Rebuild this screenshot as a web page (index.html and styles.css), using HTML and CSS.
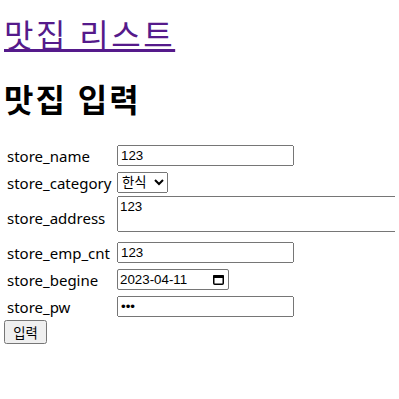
FILE: index.html
```html
<!DOCTYPE html>
<html lang="ko">
<head>
    <meta charset="UTF-8">
    <title>맛집 입력</title>
    <link rel="stylesheet" href="styles.css">
</head>
<body>

    <h1 class="list-link"><a href="#">맛집 리스트</a></h1>
    <h1 class="page-title">맛집 입력</h1>

    <form class="store-form">
        <div class="form-grid">
            <label>store_name</label>
            <div class="field"><input type="text" class="txt" value="123"></div>

            <label>store_category</label>
            <div class="field">
                <select class="sel">
                    <option>한식</option>
                    <option>중식</option>
                    <option>일식</option>
                </select>
            </div>

            <label>store_address</label>
            <div class="field top"><textarea class="area">123</textarea></div>

            <label>store_emp_cnt</label>
            <div class="field"><input type="text" class="txt" value="123"></div>

            <label>store_begine</label>
            <div class="field">
                <!-- date shown in yyyy-mm-dd like the ko locale -->
                <div class="date-box">
                    <input type="text" class="date-txt" value="2023-04-11">
                    <svg class="cal-icon" width="11" height="10" viewBox="0 0 11 10">
                        <rect x="0.75" y="0.75" width="9.5" height="8.5" rx="1" fill="none" stroke="#000" stroke-width="1.5"/>
                        <rect x="0" y="0" width="11" height="3" rx="1" fill="#000"/>
                    </svg>
                </div>
            </div>

            <label>store_pw</label>
            <div class="field"><input type="password" class="txt" value="123"></div>
        </div>
        <button type="submit" class="submit-btn">입력</button>
    </form>

</body>
</html>
```

FILE: styles.css
```css
html {
    overflow-x: hidden;
}

body {
    margin: 0 4px;
    font-family: "Noto Sans", "Noto Sans CJK KR", sans-serif;
    font-size: 15px;
    color: #000;
    background: #fff;
}

h1 {
    font-family: "Noto Sans CJK KR", sans-serif;
    font-size: 32px;
    line-height: 42px;
    margin: 0;
}

.list-link {
    font-weight: normal;
    letter-spacing: 2.5px;
    padding-top: 12px;
}

.list-link a {
    color: #551a8b;
}

.page-title {
    font-weight: bold;
    letter-spacing: 2px;
    padding-top: 23px;
}

/* form rows */
.store-form {
    margin-top: 23px;
}

.form-grid {
    display: grid;
    grid-template-columns: 113px auto;
    grid-template-rows: 27px 27px 43px 27px 27px 27px;
    align-items: center;
}

.form-grid label {
    padding-left: 3px;
    white-space: nowrap;
}

.field {
    display: flex;
    align-items: center;
}

.field.top {
    align-self: start;
}

input, select, textarea, button {
    font-family: "Liberation Sans", "Noto Sans CJK KR", sans-serif;
    font-size: 13.33px;
    margin: 0;
}

.txt {
    width: 177px;
    height: 21px;
    box-sizing: border-box;
}

.sel {
    width: 51px;
    height: 21px;
    box-sizing: border-box;
}

.area {
    width: 330px;
    height: 36px;
    flex-shrink: 0;
    box-sizing: border-box;
    resize: both;
}

.date-box {
    width: 112px;
    height: 21px;
    box-sizing: border-box;
    border: 1px solid #767676;
    border-radius: 2px;
    display: flex;
    align-items: center;
    padding: 0 4px 0 2px;
}

.date-txt {
    border: none;
    outline: none;
    padding: 0;
    width: 80px;
    background: transparent;
}

.cal-icon {
    margin-left: auto;
}

.submit-btn {
    width: 43px;
    height: 24px;
    box-sizing: border-box;
}
```
